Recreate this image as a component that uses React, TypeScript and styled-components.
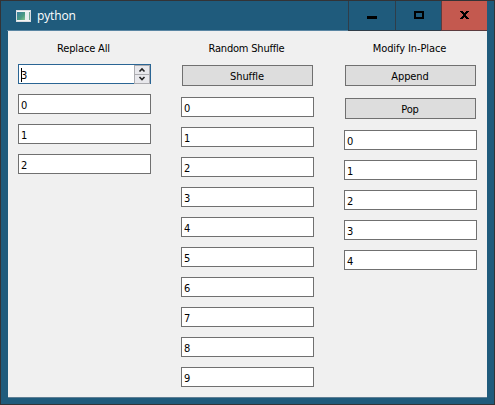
import React from "react";
import styled, { createGlobalStyle } from "styled-components";

const GlobalStyle = createGlobalStyle`
  * { box-sizing: border-box; }
  body { margin: 0; overflow: hidden; }
`;

const Window = styled.div`
  width: 495px;
  height: 405px;
  display: flex;
  flex-direction: column;
  background: #1f5b7c;
  border: 1px solid #333336;
  font-family: "DejaVu Sans Condensed", "DejaVu Sans", sans-serif;
  font-stretch: condensed;
  font-size: 11px;
  color: #000;
`;

const TitleBar = styled.header`
  flex: none;
  height: 30px;
  padding: 0 7px 0 6px;
  display: flex;
`;

const Caption = styled.div`
  flex: 1;
  display: flex;
  align-items: center;
  gap: 6px;
  padding: 0 0 0 9px;
  border-bottom: 1px solid #5a86a3;
`;

const Title = styled.span`
  font: 12px/16px "Open Sans", "Noto Sans", sans-serif;
  letter-spacing: -0.15px;
  color: #fff;
`;

const WindowButton = styled.button<{ $width: number; $close?: boolean }>`
  width: ${(p) => p.$width}px;
  height: 30px;
  padding: 0;
  display: flex;
  border: solid ${(p) => (p.$close ? "#5c3b3e" : "#2f3d49")};
  border-width: 0 0 1px 1px;
  background: ${(p) => (p.$close ? "#c4594f" : "#1f5b7c")};
`;

const Client = styled.main`
  flex: none;
  height: 367px;
  margin: 0 7px;
  padding: 9px 10px;
  display: flex;
  gap: 30px;
  background: #f0f0f0;
  border-bottom: 1px solid #5f7f94;
`;

const Column = styled.section`
  width: 133px;
  display: flex;
  flex-direction: column;
`;

const Heading = styled.div<{ $spacing: number }>`
  height: 16px;
  margin-bottom: 8px;
  padding-right: 2px;
  line-height: 18px;
  text-align: center;
  white-space: nowrap;
  letter-spacing: ${(p) => p.$spacing}px;
`;

const PushButton = styled.button`
  height: 21px;
  margin: 1px 1px 11px;
  padding: 1px 1px 0 0;
  border: 1px solid #707070;
  background: #dddddd;
  color: #000;
  font: inherit;
  line-height: 19px;
  letter-spacing: -0.1px;
`;

const Field = styled.div<{ $active?: boolean }>`
  flex: none;
  height: 20px;
  margin-bottom: 10px;
  padding-left: 2px;
  display: flex;
  border: 1px solid ${(p) => (p.$active ? "#2a6594" : "#707070")};
  background: #fff;
`;

const Value = styled.span`
  flex: 1;
  line-height: 22px;
`;

const Caret = styled.span`
  width: 1px;
  height: 14px;
  margin: 3px -1px 0 0;
  background: #000;
`;

const Stepper = styled.div`
  width: 16px;
  display: flex;
  flex-direction: column;
`;

const Step = styled.button`
  flex: 1;
  padding: 0;
  display: flex;
  border: 1px solid #acacb0;
  background: #e8e8ec;
  & + & { border-top: 0; }
`;

const AppIcon = () => (
  <svg width="15" height="12" viewBox="0 0 15 12" shapeRendering="crispEdges">
    <defs>
      <linearGradient id="pane" x1="0" y1="0" x2="1" y2="1">
        <stop offset="0" stopColor="#397fa0" />
        <stop offset="0.6" stopColor="#4b9b82" />
        <stop offset="1" stopColor="#86c390" />
      </linearGradient>
    </defs>
    <path d="M0 0h15v12H0z" fill="#d9dde1" />
    <path d="M1 1h13v1H1z" fill="#f7f7f7" />
    <path d="M1 2h8v8H1z" fill="url(#pane)" />
    <path d="M9 2h4v8H9z" fill="#e9eef0" />
    <path d="M13 2h1v8h-1z" fill="#73a895" />
    <path d="M1 10h13v1H1z" fill="#f4f4f4" />
  </svg>
);

const MinimizeIcon = () => (
  <svg width="46" height="29" shapeRendering="crispEdges">
    <path d="M18 15h10v3H18z" />
  </svg>
);

const MaximizeIcon = () => (
  <svg width="45" height="29" shapeRendering="crispEdges">
    <path fillRule="evenodd" d="M18 10h10v8H18zM20 12v4h6v-4z" />
  </svg>
);

const CloseIcon = () => (
  <svg width="45" height="29" shapeRendering="crispEdges">
    <path d="M18 10h3v1h1v1h1v-1h1v-1h3v1h-1v1h-1v1h-1v2h1v1h1v1h1v1h-3v-1h-1v-1h-1v1h-1v1h-3v-1h1v-1h1v-1h1v-2h-1v-1h-1v-1h-1z" />
  </svg>
);

const Chevron = ({ down }: { down?: boolean }) => (
  <svg width="14" height="8">
    <path
      fill="none"
      stroke="#222"
      strokeWidth="1.6"
      d={down ? "M4.5 2l2.5 2.5L9.5 2" : "M4.5 5.5L7 3l2.5 2.5"}
    />
  </svg>
);

const Fields = ({ values }: { values: number[] }) => (
  <>
    {values.map((value) => (
      <Field key={value}>
        <Value>{value}</Value>
      </Field>
    ))}
  </>
);

export default function App() {
  return (
    <Window>
      <GlobalStyle />
      <TitleBar>
        <Caption>
          <AppIcon />
          <Title>python</Title>
        </Caption>
        <WindowButton $width={47} aria-label="Minimize"><MinimizeIcon /></WindowButton>
        <WindowButton $width={46} aria-label="Maximize"><MaximizeIcon /></WindowButton>
        <WindowButton $width={46} $close aria-label="Close"><CloseIcon /></WindowButton>
      </TitleBar>
      <Client>
        <Column>
          <Heading $spacing={-0.15}>Replace All</Heading>
          <Field $active>
            <Caret />
            <Value>3</Value>
            <Stepper>
              <Step aria-label="Increase"><Chevron /></Step>
              <Step aria-label="Decrease"><Chevron down /></Step>
            </Stepper>
          </Field>
          <Fields values={[0, 1, 2]} />
        </Column>
        <Column>
          <Heading $spacing={-0.2}>Random Shuffle</Heading>
          <PushButton>Shuffle</PushButton>
          <Fields values={[0, 1, 2, 3, 4, 5, 6, 7, 8, 9]} />
        </Column>
        <Column>
          <Heading $spacing={-0.1}>Modify In-Place</Heading>
          <PushButton>Append</PushButton>
          <PushButton>Pop</PushButton>
          <Fields values={[0, 1, 2, 3, 4]} />
        </Column>
      </Client>
    </Window>
  );
}
